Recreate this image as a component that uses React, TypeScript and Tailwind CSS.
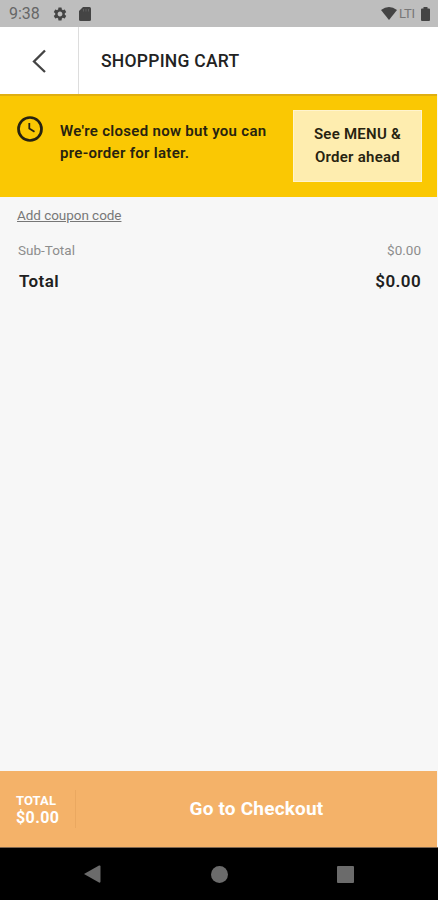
import React from "react";
import { MdSettings } from "react-icons/md";

function StatusBar() {
  return (
    <div className="flex h-[27px] shrink-0 items-center bg-[#bebebe] pl-[9px] pr-[8px] text-[#444444]">
      <span className="w-[43px] text-[16px] leading-[28px] text-[#666666]">9:38</span>
      <MdSettings className="mt-px h-[16px] w-[16px]" />
      <svg className="ml-[11px] mt-px h-[14px] w-[12px]" viewBox="0 0 12 14" fill="currentColor">
        <path d="M4 0h6.5Q12 0 12 1.5v11q0 1.500-1.500 1.500h-9Q0 14 0 12.500V4Z" />
        <path d="M4.500 2v2.500M7 2v2.500M9.500 2v2.500" stroke="#666666" strokeWidth="0.800" />
      </svg>
      <svg className="ml-auto h-[13px] w-[16px]" viewBox="0 0 16 13" fill="currentColor">
        <path d="M0 3Q8-3 16 3L8 13Z" />
      </svg>
      <span className="ml-[2px] w-[16px] text-[13px] leading-[27px] tracking-[-0.3px] text-[#777777]">LTI</span>
      <svg className="ml-[6px] mt-px h-[14px] w-[9px]" viewBox="0 0 9 14" fill="currentColor">
        <path d="M2.500 0h4v1.500H8q1 0 1 1V13q0 1-1 1H1q-1 0-1-1V2.500q0-1 1-1h1.500Z" />
      </svg>
    </div>
  );
}

function Header() {
  return (
    <header className="flex h-[67px] shrink-0 bg-white">
      <button aria-label="Back" className="flex w-[79px] items-center justify-center border-r border-[#dddddd]">
        <svg className="h-[24px] w-[14px]" viewBox="0 0 14 24" fill="none" stroke="#444444" strokeWidth="2.300">
          <path d="M13 1.500L2 12.500L13 23" />
        </svg>
      </button>
      <h1 className="ml-[22px] text-[17.500px] font-medium leading-[68px] tracking-[0.250px] text-[#222222]">SHOPPING CART</h1>
    </header>
  );
}

function ClosedBanner() {
  return (
    <section className="mr-px flex h-[103px] shrink-0 border-t-2 border-[#dfaf12] bg-[#fac803] pl-[17px] pr-[15px] text-[#272310]">
      <svg className="mt-[20px] h-[26px] w-[26px]" viewBox="0 0 26 26" fill="none" stroke="currentColor">
        <circle cx="13" cy="13" r="11.500" strokeWidth="2.700" />
        <path d="M12.300 7v5.500l5.200 3.300" strokeWidth="1.800" />
      </svg>
      <p className="ml-[17px] mt-[24px] whitespace-nowrap text-[15px] font-semibold leading-[22px] tracking-[0.300px]">
        We're closed now but you can
        <br />
        pre-order for later.
      </p>
      <button className="ml-auto mt-[14px] flex h-[72px] w-[129px] items-center justify-center border border-[#fff4ce] bg-[#feedaf] text-[15px] font-semibold leading-[23px] tracking-[0.250px]">
        <span>
          See MENU &amp;
          <br />
          Order ahead
        </span>
      </button>
    </section>
  );
}

function Summary() {
  return (
    <main className="flex-1 pl-[18px] pr-[17px]">
      <a className="-ml-px mt-[8px] block w-fit text-[13.500px] leading-[20px] tracking-[-0.050px] text-[#777777] underline">Add coupon code</a>
      <div className="mt-[15px] flex justify-between text-[13.500px] leading-[20px] text-[#8d8d8d]">
        <span>Sub-Total</span>
        <span>$0.00</span>
      </div>
      <div className="mt-[9px] flex justify-between text-[17px] font-semibold leading-[24px] tracking-[0.400px] text-[#202020]">
        <span className="ml-px">Total</span>
        <span>$0.00</span>
      </div>
    </main>
  );
}

function CheckoutBar() {
  return (
    <footer className="mr-px flex h-[76px] shrink-0 items-center bg-[#f4b269] text-white">
      <div className="flex h-[38px] w-[76px] flex-col justify-center border-r border-[#eaa860] pl-[16px] font-bold">
        <span className="text-[13px] leading-[16px] tracking-[0.100px]">TOTAL</span>
        <span className="text-[16px] leading-[17px] tracking-[0.400px]">$0.00</span>
      </div>
      <button className="flex-1 text-[19px] font-bold leading-[24px] tracking-[0.200px]">Go to Checkout</button>
    </footer>
  );
}

function NavigationBar() {
  return (
    <nav className="flex h-[53px] shrink-0 items-center border-t border-[#7d6650] bg-black pl-[84px] text-[#6b6b6b]">
      <svg className="h-[18px] w-[17px]" viewBox="0 0 17 18" fill="currentColor">
        <path d="M0 9L15 .500Q16.500 0 16.500 1.500v15q0 1.500-1.500 1Z" />
      </svg>
      <div className="ml-[110px] h-[17px] w-[17px] rounded-full bg-[#6b6b6b]" />
      <div className="ml-[109px] h-[17px] w-[17px] rounded-[1px] bg-[#6b6b6b]" />
    </nav>
  );
}

export default function App() {
  return (
    <div className="flex h-[900px] w-[438px] flex-col overflow-hidden bg-[#f7f7f7] font-['Roboto',sans-serif]">
      <StatusBar />
      <Header />
      <ClosedBanner />
      <Summary />
      <CheckoutBar />
      <NavigationBar />
    </div>
  );
}
